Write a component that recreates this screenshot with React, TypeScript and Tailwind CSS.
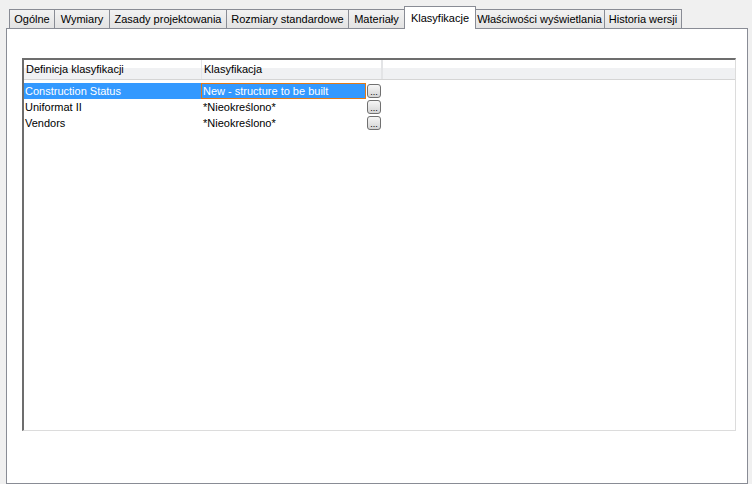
import React from 'react';

const tabs = [
  { label: 'Ogólne', w: 45 },
  { label: 'Wymiary', w: 55 },
  { label: 'Zasady projektowania', w: 117 },
  { label: 'Rozmiary standardowe', w: 122 },
  { label: 'Materiały', w: 56 },
  { label: 'Klasyfikacje', w: 70, active: true },
  { label: 'Właściwości wyświetlania', w: 130 },
  { label: 'Historia wersji', w: 77 },
];

const rows = [
  { name: 'Construction Status', value: 'New - structure to be built', selected: true },
  { name: 'Uniformat II', value: '*Nieokreślono*' },
  { name: 'Vendors', value: '*Nieokreślono*' },
];

const DotsButton = () => (
  <div className="ml-[1px] w-[14px] h-[14px] flex-shrink-0 rounded-[3px] border border-[#707070] bg-gradient-to-b from-[#f6f6f6] to-[#d4d4d4] flex items-end justify-center text-[9px] leading-[10px] text-black">
    ...
  </div>
);

export default function App() {
  return (
    <div
      className="w-[752px] h-[484px] bg-[#f0f0f0] overflow-hidden text-[11px] text-black"
      style={{ fontFamily: '"Liberation Sans", Arial, sans-serif' }}
    >
      {/* tab strip */}
      <div className="flex items-end h-[28px] pl-[9px]">
        {tabs.map((t) =>
          t.active ? (
            <div
              key={t.label}
              className="relative z-10 -mb-px h-[23px] mx-[-1px] border border-b-0 border-[#898c95] bg-white flex items-start justify-center pt-[3px]"
              style={{ width: t.w + 2 }}
            >
              {t.label}
            </div>
          ) : (
            <div
              key={t.label}
              className="h-[19px] border border-b-0 border-[#898c95] bg-gradient-to-b from-[#f2f2f2] to-[#e3e3e3] flex items-center justify-center ml-[-1px] first:ml-0"
              style={{ width: t.w + 1 }}
            >
              {t.label}
            </div>
          )
        )}
      </div>

      {/* tab page */}
      <div className="ml-[6px] w-[742px] h-[456px] border border-[#898c95] bg-white pt-[31px] pl-[15px]">
        <div className="w-[714px] h-[373px] border-t-2 border-l-2 border-[#6d6d6d] border-r border-b border-r-[#dcdcdc] border-b-[#dcdcdc] bg-white flex flex-col -mt-[2px]">
          {/* header */}
          <div className="flex h-[20px] border-b border-[#d5d5d5] bg-gradient-to-b from-white from-40% to-[#f0f1f3] to-40%">
            <div className="w-[178px] border-r border-[#e3e4e6] flex items-center pl-[2px]">Definicja klasyfikacji</div>
            <div className="w-[181px] border-r-2 border-[#e3e4e6] flex items-center pl-[2px]">Klasyfikacja</div>
            <div className="flex-1" />
          </div>

          {/* rows */}
          <div className="pt-[3px] flex flex-col">
            {rows.map((r) => (
              <div key={r.name} className="flex h-[16px] items-center">
                <div
                  className={`w-[177px] h-full flex items-center pl-[1px] ${
                    r.selected ? 'bg-[#3399ff] text-white' : ''
                  }`}
                >
                  {r.name}
                </div>
                <div
                  className={`w-[165px] h-full flex items-center pl-[2px] ${
                    r.selected ? 'bg-[#3399ff] text-white shadow-[inset_0_0_0_1px_#e27a17]' : ''
                  }`}
                >
                  {r.value}
                </div>
                <DotsButton />
              </div>
            ))}
          </div>
        </div>
      </div>
    </div>
  );
}
